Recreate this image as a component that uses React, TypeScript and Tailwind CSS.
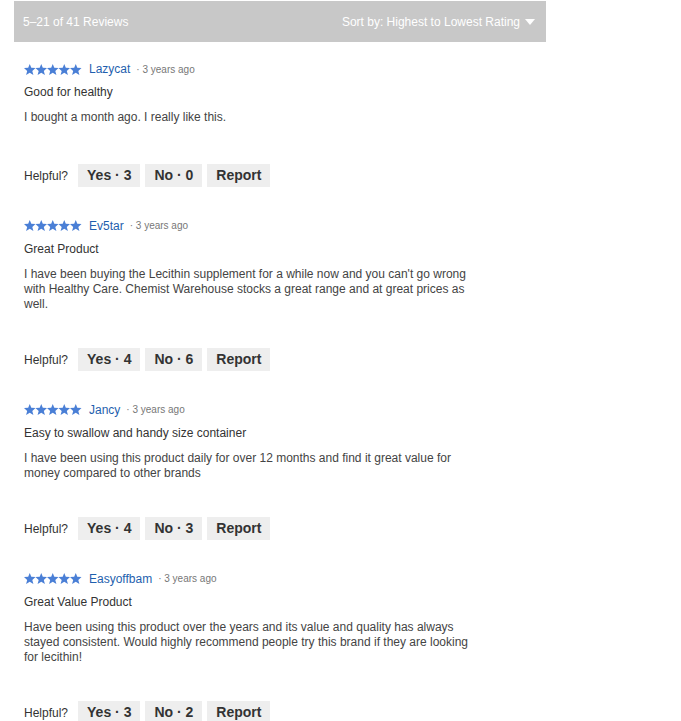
import React from 'react';

type Review = {
  nome: string;
  quando: string;
  titulo: string;
  texto: string;
  sim: number;
  nao: number;
};

const REVIEWS: Review[] = [
  {
    nome: 'Lazycat',
    quando: '3 years ago',
    titulo: 'Good for healthy',
    texto: 'I bought a month ago. I really like this.',
    sim: 3,
    nao: 0,
  },
  {
    nome: 'Ev5tar',
    quando: '3 years ago',
    titulo: 'Great Product',
    texto:
      "I have been buying the Lecithin supplement for a while now and you can't go wrong with Healthy Care. Chemist Warehouse stocks a great range and at great prices as well.",
    sim: 4,
    nao: 6,
  },
  {
    nome: 'Jancy',
    quando: '3 years ago',
    titulo: 'Easy to swallow and handy size container',
    texto:
      'I have been using this product daily for over 12 months and find it great value for money compared to other brands',
    sim: 4,
    nao: 3,
  },
  {
    nome: 'Easyoffbam',
    quando: '3 years ago',
    titulo: 'Great Value Product',
    texto:
      'Have been using this product over the years and its value and quality has always stayed consistent. Would highly recommend people try this brand if they are looking for lecithin!',
    sim: 3,
    nao: 2,
  },
];

function Estrelas() {
  // 5 estrelas cheias, lado a lado
  const estrela = (dx: number) =>
    `${dx + 5.75},0 ${dx + 7.3},3.8 ${dx + 11.5},4.1 ${dx + 8.3},6.9 ${dx + 9.4},11 ${dx + 5.75},8.7 ${dx + 2.1},11 ${dx + 3.2},6.9 ${dx + 0},4.1 ${dx + 4.2},3.8`;
  return (
    <svg width="58" height="11" viewBox="0 0 58 11" aria-label="5 stars">
      {[0, 1, 2, 3, 4].map((i) => (
        <polygon key={i} points={estrela(i * 11.5)} fill="#4a7fd6" />
      ))}
    </svg>
  );
}

function Botao({ children }: { children: React.ReactNode }) {
  return (
    <button
      type="button"
      className="h-[23px] px-[9px] bg-[#eeeeee] text-[14px] font-bold text-[#333333] leading-[23px]"
    >
      {children}
    </button>
  );
}

function CartaoReview({ r, primeiro }: { r: Review; primeiro: boolean }) {
  return (
    <div className={primeiro ? 'px-[10px] pt-[19px]' : 'px-[10px] pt-[30.5px]'}>
      <div className="flex items-center h-4">
        <Estrelas />
        <span className="ml-[7px] text-[12px] text-[#1f5fae]">{r.nome}</span>
        <span className="ml-[6px] text-[10px] text-[#777777]">· {r.quando}</span>
      </div>
      <p className="mt-[8px] text-[12px] leading-[15px] text-[#333333]">{r.titulo}</p>
      <p className="mt-[10px] w-[452px] min-h-[17.5px] text-[12px] leading-[15px] text-[#444444]">
        {r.texto}
      </p>
      <div className="mt-[36.5px] flex items-center">
        <span className="text-[12px] text-[#333333] mr-[10px]">Helpful?</span>
        <div className="flex gap-[5px]">
          <Botao>Yes · {r.sim}</Botao>
          <Botao>No · {r.nao}</Botao>
          <Botao>Report</Botao>
        </div>
      </div>
    </div>
  );
}

export default function App() {
  return (
    <div className="min-h-screen bg-white font-['Liberation_Sans',Arial,sans-serif]">
      <div className="ml-[14px] w-[532px] pt-px">
        <div className="h-[41px] bg-[#c8c8c8] flex items-center justify-between pl-[9px] pr-[11px] text-white text-[12px]">
          <span>5–21 of 41 Reviews</span>
          <span className="flex items-center">
            Sort by: Highest to Lowest Rating
            <svg width="10" height="6" viewBox="0 0 10 6" className="ml-[5px]">
              <polygon points="0,0 10,0 5,6" fill="#ffffff" />
            </svg>
          </span>
        </div>
        {REVIEWS.map((r, i) => (
          <CartaoReview key={r.nome} r={r} primeiro={i === 0} />
        ))}
      </div>
    </div>
  );
}
